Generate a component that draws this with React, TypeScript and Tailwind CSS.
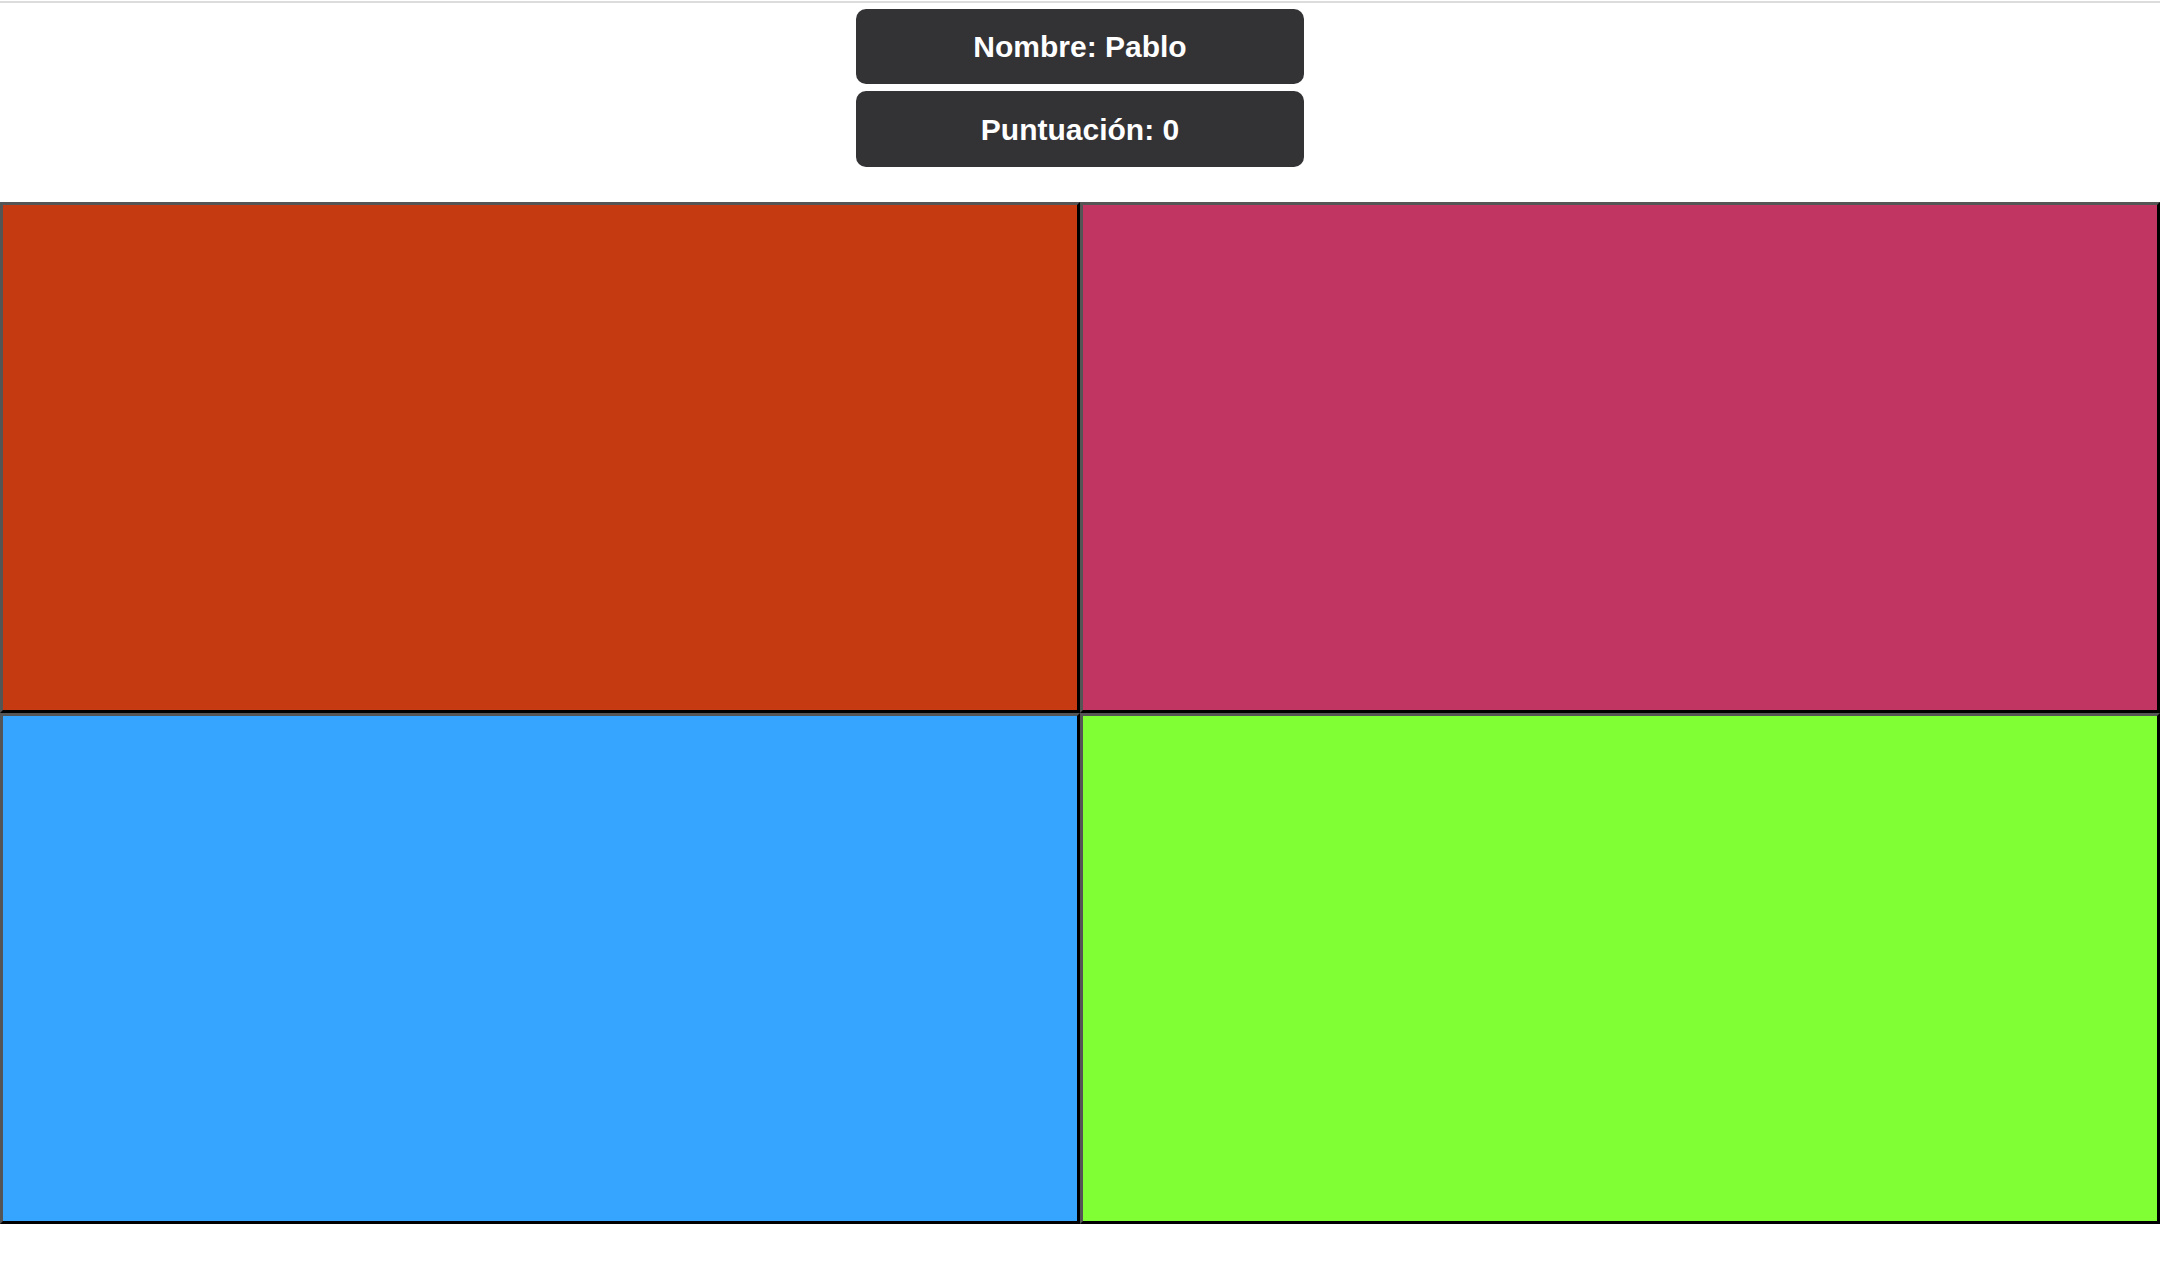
const cells = [
  { id: "red", cls: "bg-[#c53a10]" },
  { id: "pink", cls: "bg-[#c13562]" },
  { id: "blue", cls: "bg-[#36a5ff]" },
  { id: "green", cls: "bg-[#80ff35]" },
];

export default function App() {
  return (
    <div className="min-h-screen bg-white font-['Liberation_Sans',Arial,sans-serif]">
      <div className="h-[3px] border-t-2 border-[#dcdcdc] mt-px" />
      <div className="flex flex-col items-center gap-[7px] pt-[5px]">
        <div className="w-[448px] h-[75px] rounded-[10px] bg-[#333235] text-white font-bold text-[30px] flex items-center justify-center">
          Nombre: Pablo
        </div>
        <div className="w-[448px] h-[76px] rounded-[10px] bg-[#333235] text-white font-bold text-[30px] flex items-center justify-center">
          Puntuación: 0
        </div>
      </div>
      <div className="grid grid-cols-2 mt-[35px]">
        {cells.map((c) => (
          <div
            key={c.id}
            className={`h-[511px] border-[3px] border-t-[#555555] border-l-[#555555] border-b-black border-r-black ${c.cls}`}
          />
        ))}
      </div>
    </div>
  );
}
